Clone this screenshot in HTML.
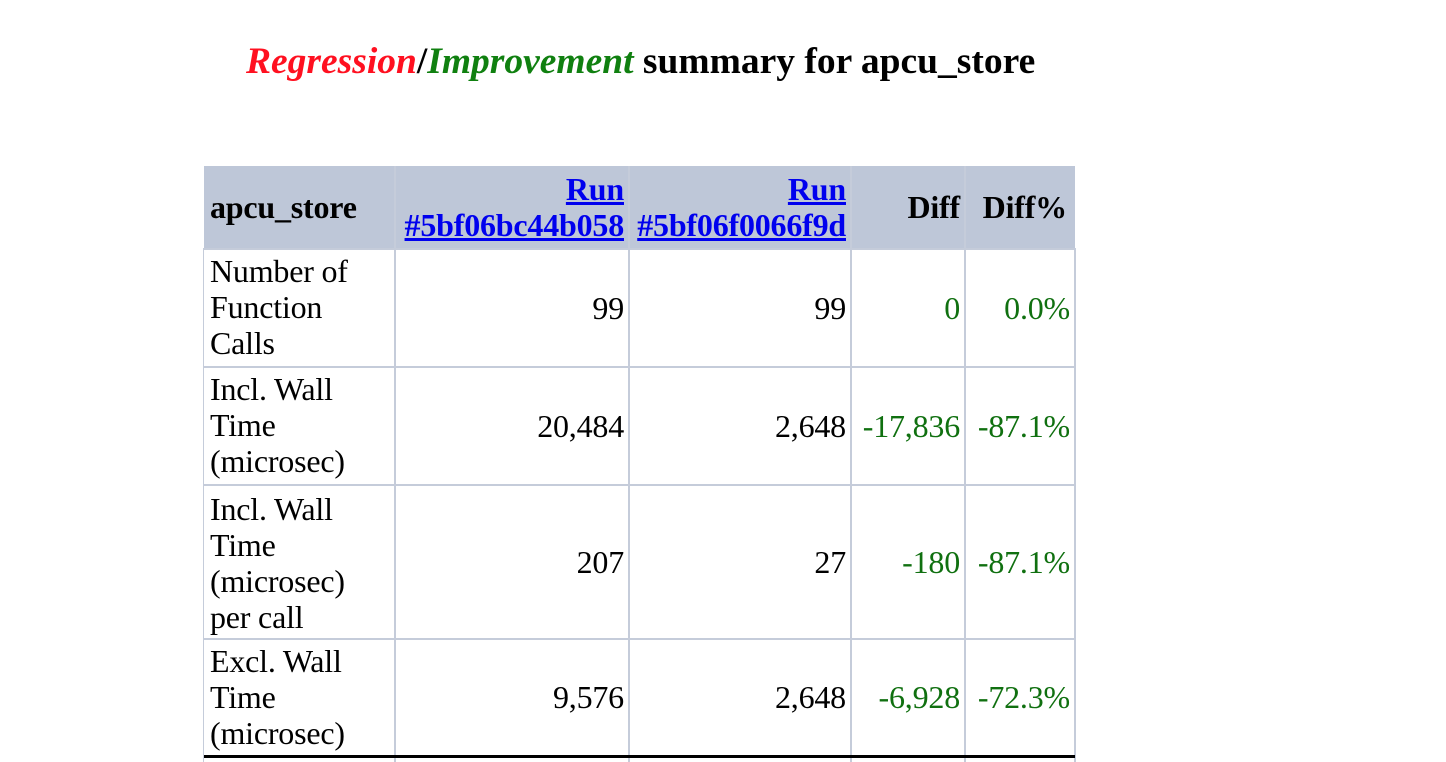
<!DOCTYPE html>
<html><head><meta charset="utf-8"><style>
body{margin:0;width:1446px;height:762px;background:#fff;position:relative;overflow:hidden;font-family:"Liberation Serif",serif;}
h1{position:absolute;left:246px;top:40px;margin:0;font-size:37.5px;font-weight:bold;white-space:nowrap;line-height:44px;letter-spacing:0px;}
.c{position:absolute;font-size:32px;line-height:36px;box-sizing:border-box;display:flex;align-items:center;white-space:nowrap;letter-spacing:-0.2px;}
.r{justify-content:flex-end;text-align:right;padding-right:4px;}
.l{padding-left:6px;}
.h{background:#bec7d8;font-weight:bold;}
.g{color:#107010;}
a{color:#0000ee;text-decoration:underline;}
.v{position:absolute;width:2px;background:#c5ccda;}
.hl{position:absolute;height:2px;background:#c5ccda;left:204px;width:871px;}
</style></head><body>
<h1><i style="color:#ff1020">Regression</i>/<i style="color:#108010">Improvement</i> summary for apcu_store</h1>

<div class="v" style="left:394px;top:166px;height:596px"></div>
<div class="v" style="left:628px;top:166px;height:596px"></div>
<div class="v" style="left:850px;top:166px;height:596px"></div>
<div class="v" style="left:964px;top:166px;height:596px"></div>
<div class="v" style="left:1074px;top:248px;height:514px"></div>
<div class="v" style="left:203px;top:248px;height:514px;width:1px"></div>
<div class="hl" style="top:248px"></div>
<div class="hl" style="top:366px"></div>
<div class="hl" style="top:484px"></div>
<div class="hl" style="top:638px"></div>
<div style="position:absolute;left:204px;top:755px;width:871px;height:3px;background:#000"></div>

<div class="c h l" style="left:204px;top:166px;width:190px;height:82px">apcu_store</div>
<div class="c h r" style="left:396px;top:166px;width:232px;height:82px"><a>Run<br>#5bf06bc44b058</a></div>
<div class="c h r" style="left:630px;top:166px;width:220px;height:82px"><a>Run<br>#5bf06f0066f9d</a></div>
<div class="c h r" style="left:852px;top:166px;width:112px;height:82px">Diff</div>
<div class="c h r" style="left:966px;top:166px;width:109px;height:82px;padding-right:8px">Diff%</div>

<div class="c l" style="left:204px;top:252px;width:190px;height:110px">Number of<br>Function<br>Calls</div>
<div class="c r" style="left:396px;top:250px;width:232px;height:116px">99</div>
<div class="c r" style="left:630px;top:250px;width:220px;height:116px">99</div>
<div class="c r g" style="left:852px;top:250px;width:112px;height:116px">0</div>
<div class="c r g" style="left:966px;top:250px;width:108px;height:116px">0.0%</div>

<div class="c l" style="left:204px;top:370px;width:190px;height:110px">Incl. Wall<br>Time<br>(microsec)</div>
<div class="c r" style="left:396px;top:368px;width:232px;height:116px">20,484</div>
<div class="c r" style="left:630px;top:368px;width:220px;height:116px">2,648</div>
<div class="c r g" style="left:852px;top:368px;width:112px;height:116px">-17,836</div>
<div class="c r g" style="left:966px;top:368px;width:108px;height:116px">-87.1%</div>

<div class="c l" style="left:204px;top:490px;width:190px;height:146px">Incl. Wall<br>Time<br>(microsec)<br>per call</div>
<div class="c r" style="left:396px;top:486px;width:232px;height:152px">207</div>
<div class="c r" style="left:630px;top:486px;width:220px;height:152px">27</div>
<div class="c r g" style="left:852px;top:486px;width:112px;height:152px">-180</div>
<div class="c r g" style="left:966px;top:486px;width:108px;height:152px">-87.1%</div>

<div class="c l" style="left:204px;top:642px;width:190px;height:110px">Excl. Wall<br>Time<br>(microsec)</div>
<div class="c r" style="left:396px;top:640px;width:232px;height:114px">9,576</div>
<div class="c r" style="left:630px;top:640px;width:220px;height:114px">2,648</div>
<div class="c r g" style="left:852px;top:640px;width:112px;height:114px">-6,928</div>
<div class="c r g" style="left:966px;top:640px;width:108px;height:114px">-72.3%</div>
</body></html>
